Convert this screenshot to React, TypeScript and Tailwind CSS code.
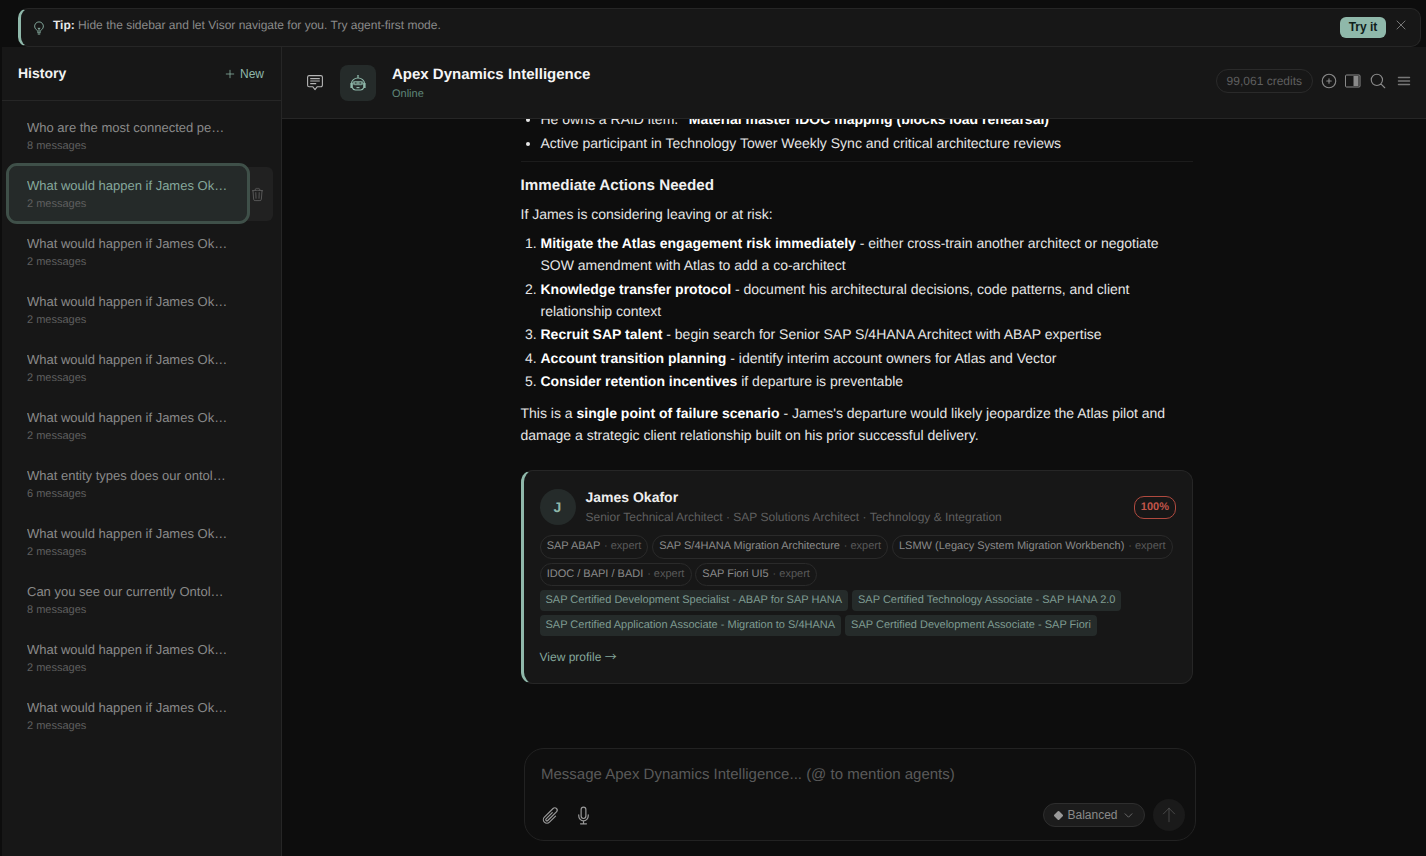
import React from "react";
import { HiOutlineLightBulb, HiOutlineMagnifyingGlass, HiOutlineBars3, HiOutlineMicrophone, HiOutlinePaperClip, HiOutlinePlusCircle, HiOutlineTrash, HiOutlineXMark, HiOutlinePlus, HiOutlineChevronDown, HiOutlineArrowUp } from "react-icons/hi2";

const history = [
  ["Who are the most connected people in the company?", "8 messages"],
  ["What would happen if James Okafor left the company?", "2 messages"],
  ["What would happen if James Okafor left the company?", "2 messages"],
  ["What would happen if James Okafor left the company?", "2 messages"],
  ["What would happen if James Okafor left the company?", "2 messages"],
  ["What would happen if James Okafor left the company?", "2 messages"],
  ["What entity types does our ontology contain right now?", "6 messages"],
  ["What would happen if James Okafor left the company?", "2 messages"],
  ["Can you see our currently Ontology and its entities?", "8 messages"],
  ["What would happen if James Okafor left the company?", "2 messages"],
  ["What would happen if James Okafor left the company?", "2 messages"],
];

const skills = [
  "SAP ABAP",
  "SAP S/4HANA Migration Architecture",
  "LSMW (Legacy System Migration Workbench)",
  "IDOC / BAPI / BADI",
  "SAP Fiori UI5",
];

const certs = [
  "SAP Certified Development Specialist - ABAP for SAP HANA",
  "SAP Certified Technology Associate - SAP HANA 2.0",
  "SAP Certified Application Associate - Migration to S/4HANA",
  "SAP Certified Development Associate - SAP Fiori",
];

const actions: [string, string][] = [
  ["Mitigate the Atlas engagement risk immediately", " - either cross-train another architect or negotiate SOW amendment with Atlas to add a co-architect"],
  ["Knowledge transfer protocol", " - document his architectural decisions, code patterns, and client relationship context"],
  ["Recruit SAP talent", " - begin search for Senior SAP S/4HANA Architect with ABAP expertise"],
  ["Account transition planning", " - identify interim account owners for Atlas and Vector"],
  ["Consider retention incentives", " if departure is preventable"],
];

function RobotIcon() {
  return (
    <svg viewBox="0 0 18 18" className="h-[18px] w-[18px] text-[#8fb8aa]" fill="none" stroke="currentColor" strokeWidth="1.2">
      <circle cx="9" cy="1.8" r="0.9" fill="currentColor" stroke="none" />
      <path d="M9 2.5V4" />
      <path d="M2.5 11V9.5a6.5 5.5 0 0 1 13 0V11" />
      <path d="M2 9.5h1.2v4H2zM14.8 9.5H16v4h-1.2z" fill="currentColor" />
      <path d="M3.2 13.5c.6 1.6 1.9 2.5 3.3 2.5h5c1.4 0 2.7-.9 3.3-2.5" />
      <rect x="3.6" y="7" width="10.8" height="4.2" rx="2.1" fill="currentColor" stroke="none" opacity="0.75" />
      <path d="M6 9h1.5M10.5 9H12" stroke="#252b2a" />
      <path d="M7.5 13.6h3" />
    </svg>
  );
}

function ChatIcon() {
  return (
    <svg viewBox="0 0 16 16" className="h-4 w-4 text-[#b5b5b5]" fill="none" stroke="currentColor" strokeWidth="1.1" strokeLinejoin="round">
      <path d="M.6 2A1.5 1.5 0 0 1 2.1.6h11.8A1.5 1.5 0 0 1 15.4 2v8.2a1.5 1.5 0 0 1-1.5 1.5h-3.6L8 14.6l-2.3-2.9H2.1a1.5 1.5 0 0 1-1.5-1.5z" />
      <path d="M3.2 3.6h9.6M3.2 6h9.6M3.2 8.6h6" />
    </svg>
  );
}

export default function App() {
  return (
    <div className="flex h-[856px] w-[1426px] flex-col overflow-hidden bg-[#0d0d0d] font-['Liberation_Sans',Arial,sans-serif] text-white opacity-[0.999] [text-rendering:geometricPrecision]">
      <div className="pl-[18px] pr-[5px] pt-2">
        <div className="flex h-[39px] items-center rounded-[10px] border border-[#262626] border-l-[3px] border-l-[#8fb8aa] bg-[#171717] pl-[11px] pr-[11px]">
          <HiOutlineLightBulb size={14} className="mt-[1px] text-[#8fb8aa]" />
          <p className="ml-[7px] -mt-[5px] text-[12px] text-[#8a8a8a]">
            <strong className="font-bold text-[#e8e8e8]">Tip:</strong> Hide the sidebar and let Visor navigate for you. Try agent-first mode.
          </p>
          <button className="mb-[1px] ml-auto h-[21px] w-[46px] rounded-md bg-[#8fb8aa] text-[12px] font-bold text-[#10201b]">Try it</button>
          <HiOutlineXMark size={16} className="ml-[7px] -mt-[5px] text-[#777]" />
        </div>
      </div>

      <div className="flex min-h-0 flex-1">
        <aside className="ml-[2px] flex w-[280px] shrink-0 flex-col border-r border-[#262626] bg-[#171717]">
          <div className="flex h-[54px] shrink-0 items-center justify-between border-b border-[#262626] pl-4 pr-[17px]">
            <h2 className="text-[14px] font-bold text-[#f2f2f2]">History</h2>
            <button className="flex items-center gap-[4px] text-[12px] text-[#8fb8aa]">
              <HiOutlinePlus size={12} /> New
            </button>
          </div>
          <div className="flex flex-col gap-[3px] pl-[7px] pt-[7px]">
            {history.map(([title, count], i) => (
              <div key={i} className="relative">
                {i === 1 && (
                  <div className="absolute left-[232px] top-[1px] flex h-[54px] w-[32px] items-center justify-center rounded-r-md bg-[#212121]">
                    <HiOutlineTrash size={15} className="ml-[1px] text-[#5a5a5a]" />
                  </div>
                )}
                <div
                  className={`relative h-[55px] w-[238px] rounded-lg pl-[18px] pr-[18px] pt-[12px] ${
                    i === 1 ? "bg-[#252a29] outline-[3px] outline-[#3f5049]" : ""
                  }`}
                >
                  <div className={`truncate text-[13px] leading-[16px] ${i === 1 ? "text-[#85a89c]" : "text-[#8a8a8a]"}`}>{title}</div>
                  <div className="mt-[3px] text-[11px] leading-[15px] text-[#5f5f5f]">{count}</div>
                </div>
              </div>
            ))}
          </div>
        </aside>

        <main className="flex min-w-0 flex-1 flex-col">
          <header className="z-10 flex h-[72px] shrink-0 items-center border-b border-[#262626] bg-[#171717] pl-[25px] pr-[14px]">
            <ChatIcon />
            <div className="ml-[17px] flex h-9 w-9 items-center justify-center rounded-lg bg-[#252b2a]">
              <RobotIcon />
            </div>
            <div className="ml-4 mt-[2px]">
              <h1 className="text-[15px] font-bold leading-[20px] text-[#f5f5f5]">Apex Dynamics Intelligence</h1>
              <p className="mt-[1px] text-[11px] leading-[16px] text-[#5f8577]">Online</p>
            </div>
            <div className="mb-[3px] ml-auto flex items-center">
              <span className="rounded-full border border-[#2a2a2a] px-[10px] py-[4px] text-[12px] leading-[14px] text-[#5f5f5f]">99,061 credits</span>
              <HiOutlinePlusCircle size={18} className="ml-[7px] text-[#8a8a8a]" />
              <svg viewBox="0 0 16 14" className="ml-[7px] h-[14px] w-[16px]" fill="none">
                <rect x="0.5" y="1" width="14.5" height="12" rx="1" stroke="#8a8a8a" />
                <rect x="8.5" y="2" width="5" height="10" fill="#8a8a8a" />
              </svg>
              <HiOutlineMagnifyingGlass size={18} className="ml-[8px] text-[#8a8a8a]" />
              <HiOutlineBars3 size={16} strokeWidth={2.2} className="ml-[9px] text-[#777]" />
            </div>
          </header>

          <div className="min-h-0 flex-1 overflow-hidden pl-[238.5px]">
            <div className="-mt-[11px] w-[672.5px] text-[14px] leading-[22.4px] text-[#e6e6e6]">
              <ul className="list-disc pl-5">
                <li className="mb-[1.6px]">He owns a RAID item: <strong className="font-bold text-white">"Material master IDOC mapping (blocks load rehearsal)"</strong></li>
                <li>Active participant in Technology Tower Weekly Sync and critical architecture reviews</li>
              </ul>
              <div className="mt-[7px] border-t border-[#1c1c1c]" />
              <h3 className="mt-[13px] text-[15.2px] font-bold leading-[22px] text-[#f0f0f0]">Immediate Actions Needed</h3>
              <p className="mt-[6px]">If James is considering leaving or at risk:</p>
              <ol className="mt-[6px] list-decimal pl-5">
                {actions.map(([b, t]) => (
                  <li key={b} className="mb-[1px]">
                    <strong className="font-bold text-white">{b}</strong>
                    {t}
                  </li>
                ))}
              </ol>
              <p className="mt-[9px] leading-[22.75px]">
                This is a <strong className="font-bold text-white">single point of failure scenario</strong> - James's departure would likely jeopardize the Atlas pilot and damage a strategic client relationship built on his prior successful delivery.
              </p>

              <section className="mt-[23px] rounded-xl border border-[#262626] border-l-[3px] border-l-[#8fb8aa] bg-[#171717] pb-[17px] pl-[16px] pr-[16px] pt-[17px]">
                <div className="flex items-center">
                  <div className="flex h-9 w-9 items-center justify-center rounded-full bg-[#252b2a] text-[14px] font-bold text-[#8fb8aa]">J</div>
                  <div className="ml-[10px]">
                    <div className="text-[14px] font-bold leading-[18px] text-[#eeeeee]">James Okafor</div>
                    <div className="mt-[2px] text-[12px] leading-[18px] text-[#5f5f5f]">Senior Technical Architect · SAP Solutions Architect · Technology &amp; Integration</div>
                  </div>
                  <span className="ml-auto rounded-[10px] border border-[#b04a3f] px-[6px] py-[2px] text-[11px] font-bold leading-[17px] text-[#c2554a]">100%</span>
                </div>
                <div className="mt-[9px] flex flex-wrap gap-x-[3.5px] gap-y-[4px]">
                  {skills.map((s) => (
                    <span key={s} className="rounded-full border border-[#2a2a2a] px-[6.2px] py-[3px] text-[11px] leading-[15.5px] text-[#8a8a8a]">
                      {s} <span className="ml-[0.8px] text-[#5a5a5a]">· expert</span>
                    </span>
                  ))}
                </div>
                <div className="mt-[4px] flex flex-wrap gap-x-[4px] gap-y-[4px]">
                  {certs.map((c) => (
                    <span key={c} className="rounded-[4px] bg-[#252b2a] px-[6px] py-[2px] text-[11px] leading-[17px] text-[#7f9c92]">{c}</span>
                  ))}
                </div>
                <div className="mt-[12px] text-[12px] leading-[18px] text-[#85a89c]">
                  View profile <span className="font-['Noto_Sans_CJK_SC']">→</span>
                </div>
              </section>
            </div>
          </div>

          <div className="ml-[242px] mb-[15px] h-[93px] w-[672px] shrink-0 rounded-[20px] border border-[#222] bg-[#0f0f0f] px-4 pt-[15px]">
            <div className="text-[15px] leading-[22px] text-[#5a5a5a]">Message Apex Dynamics Intelligence... (@ to mention agents)</div>
            <div className="mt-[13px] flex items-center">
              <HiOutlinePaperClip size={19} className="text-[#9a9a9a]" />
              <HiOutlineMicrophone size={19} className="ml-[14px] text-[#9a9a9a]" />
              <button className="ml-auto mr-[-1px] flex h-6 w-[102px] items-center justify-center rounded-full border border-[#2e2e2e] bg-[#1c1c1c] pl-[1px] text-[12px] text-[#8a8a8a]">
                <span className="mr-[5px] h-[7px] w-[7px] rotate-45 rounded-[1px] bg-[#9a9a9a]" />
                Balanced
                <HiOutlineChevronDown size={11} className="ml-[5px]" />
              </button>
              <div className="ml-[9px] mr-[-6px] flex h-8 w-8 items-center justify-center rounded-full bg-[#1a1a1a]">
                <HiOutlineArrowUp size={18} strokeWidth={1} className="text-[#555]" />
              </div>
            </div>
          </div>
        </main>
      </div>
    </div>
  );
}
